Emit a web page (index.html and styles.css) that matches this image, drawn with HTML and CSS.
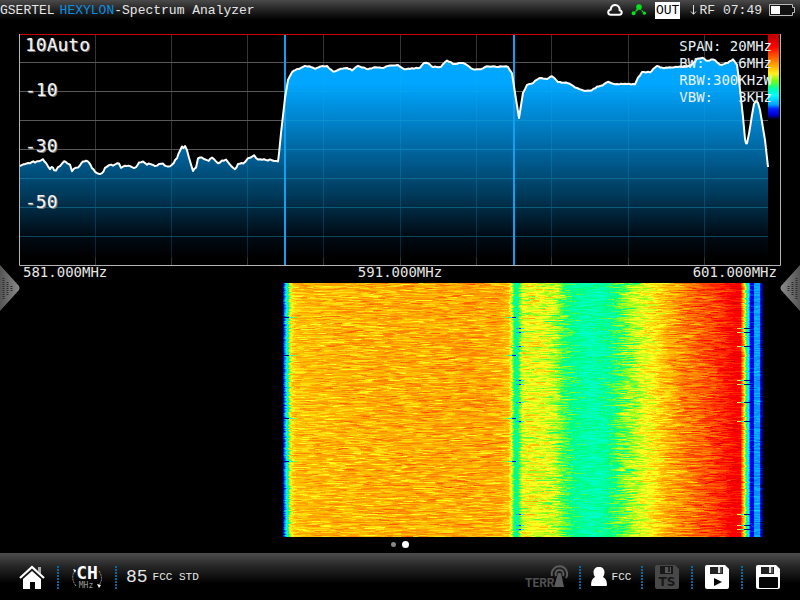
FILE: index.html
```html
<!DOCTYPE html>
<html lang="en">
<head>
<meta charset="utf-8">
<meta name="viewport" content="width=device-width, initial-scale=1">
<title>Spectrum Analyzer</title>
<link rel="stylesheet" href="styles.css">
</head>
<body>
<header class="topbar">
  <h1 class="title"><span>GSERTEL</span><span class="brand">HEXYLON</span><span class="dash">-</span><span>Spectrum Analyzer</span></h1>
  <div class="status">
    <svg width="16" height="12" viewBox="0 0 16 12" aria-hidden="true"><path d="M4 10.7H12.2C15.4 10.7 15.5 7 12.7 6.3C12.8 3 10.8 1 8.2 1C5.8 1 4 2.6 3.7 5.6C.3 6.4 .4 10.7 4 10.7Z" fill="none" stroke="#fff" stroke-width="2"/></svg>
    <svg class="nodes" width="16" height="12" viewBox="0 0 16 12" aria-hidden="true"><path d="M2.5 9.5 8 3.5 13 9" fill="none" stroke="#00d81c" stroke-width="1.2" stroke-dasharray="3 1"/><g fill="#00e51c"><circle cx="8" cy="3" r="2.8"/><circle cx="2.6" cy="9.3" r="2"/><circle cx="13.4" cy="9.2" r="1.6"/><circle cx="5.6" cy="6.6" r="1"/></g></svg>
    <span class="out">OUT</span>
    <span class="rf"><svg width="7" height="12" viewBox="0 0 7 12" aria-hidden="true"><path d="M3.5 1V10M1 7.5 3.5 10.3 6 7.5" fill="none" stroke="#ddd"/></svg>RF</span>
    <time class="clock">07:49</time>
    <svg width="26" height="12" viewBox="0 0 26 12" aria-hidden="true"><path d="M.5 .5H23.5V3.5H25.5V8.5H23.5V11.5H.5Z" fill="#111" stroke="#bbb"/><path d="M2 2H11V10H2Z" fill="#fff"/></svg>
  </div>
</header>

<main class="screen">
  <section class="plot" aria-label="Spectrum">
    <svg class="trace" viewBox="19 34 762 232" preserveAspectRatio="none" aria-hidden="true">
      <defs>
        <linearGradient id="fill" gradientUnits="userSpaceOnUse" x1="0" y1="60" x2="0" y2="258">
          <stop offset="0" stop-color="#00a8ff"/><stop offset=".12" stop-color="#00a6ff"/><stop offset=".4" stop-color="#0071b0"/><stop offset=".7" stop-color="#003654"/><stop offset=".88" stop-color="#000d17"/><stop offset="1" stop-color="#000"/>
        </linearGradient>
        <linearGradient id="scale" x1="0" y1="0" x2="0" y2="1">
          <stop offset="0" stop-color="#b00"/><stop offset=".14" stop-color="#f00"/><stop offset=".28" stop-color="#ff6a00"/><stop offset=".38" stop-color="#ffb400"/><stop offset=".46" stop-color="#fff01e"/><stop offset=".55" stop-color="#6bff10"/><stop offset=".64" stop-color="#00ffb0"/><stop offset=".72" stop-color="#0ff"/><stop offset=".83" stop-color="#00a0ff"/><stop offset=".88" stop-color="#0020ff"/><stop offset=".95" stop-color="#0000d0"/><stop offset="1" stop-color="#000020"/>
        </linearGradient>
        <path id="area"/>
        <clipPath id="under"><use href="#area"/></clipPath>
        <g id="grid-lines">
          <path class="row" d="M20 62.5H768M20 91.5H768M20 120.5H768M20 149.5H768M20 178.5H768M20 207.5H768M20 236.5H768"/>
          <path class="col" d="M95.5 35V265M171.5 35V265M247.5 35V265M323.5 35V265M400.5 35V265M476.5 35V265M551.5 35V265M628.5 35V265M704.5 35V265"/>
        </g>
      </defs>
      <use class="grid" href="#grid-lines"/>
      <g clip-path="url(#under)"><rect x="20" y="50" width="748" height="215" fill="url(#fill)"/><use class="grid-tint" href="#grid-lines"/></g>
      <path class="frame" d="M19.5 34V265.5H780.5V34"/>
      <path class="limit" d="M20 34.5H780"/>
      <rect x="768" y="35" width="11" height="84" fill="url(#scale)"/>
      <path class="marker" d="M285 35V265M514 35V265"/>
      <path class="line" id="curve"/>
    </svg>
    <div class="levels"><span>10Auto</span><span>-10</span><span>-30</span><span>-50</span></div>
    <pre class="readout">SPAN: 20MHz
BW:    6MHz
RBW:300KHzW
VBW:   3KHz</pre>
  </section>
  <div class="axis"><span>581.000MHz</span><span>591.000MHz</span><span>601.000MHz</span></div>
  <section class="waterfall" aria-label="Waterfall"><canvas id="waterfall" width="748" height="254"></canvas></section>
  <nav class="pages" aria-label="Pages">
    <button class="dot" aria-label="Page 1"></button>
    <button class="dot current" aria-label="Page 2"></button>
  </nav>
  <button class="side left" aria-label="Previous panel"><svg width="21" height="46" viewBox="0 0 21 46"><defs><linearGradient id="metal"><stop offset="0" stop-color="#555"/><stop offset="1" stop-color="#8a8a8a"/></linearGradient></defs><path d="M0 0 19 21Q20 23 19 25L0 46Z" fill="url(#metal)"/><path d="M3.5 13V34M7.5 17V30M11.5 21V26" stroke="#2c2c2c" stroke-width="2" stroke-dasharray="1 1"/></svg></button>
  <button class="side right" aria-label="Next panel"><svg width="21" height="46" viewBox="0 0 21 46"><path d="M0 0 19 21Q20 23 19 25L0 46Z" fill="url(#metal)"/><path d="M3.5 13V34M7.5 17V30M11.5 21V26" stroke="#2c2c2c" stroke-width="2" stroke-dasharray="1 1"/></svg></button>
</main>

<footer class="toolbar">
  <button class="tool wide" aria-label="Home"><svg width="26" height="24" viewBox="0 0 26 24"><path d="M19 2H22V9L19 6Z" fill="#aaa"/><path d="M1 13 13 2 25 13" fill="none" stroke="#fff" stroke-width="2.2"/><path d="M4 14 13 6 22 14V24H16V17H11V24H4Z" fill="#fff"/></svg></button>
  <button class="tool wide" aria-label="Channel or MHz"><svg width="32" height="26" viewBox="0 0 32 26"><path d="M4 6Q-1 14 5 22M28 7Q33 15 28 21" fill="none" stroke="#999" stroke-dasharray="2 1"/><path d="M2 5 5 6 4 9ZM26 20 30 21 28 24Z" fill="#fff"/><text class="ch" x="16" y="15" text-anchor="middle">CH</text><text class="mhz" x="15" y="24" text-anchor="middle">MHz</text></svg></button>
  <button class="tool channel"><span class="number">85</span><span>FCC STD</span></button>
  <button class="tool terr" aria-label="Terrestrial"><svg width="44" height="24" viewBox="0 0 44 24"><text class="band" x="0" y="22">TERR</text><path d="M33 8H36L39 22H29Z" fill="#5c5c5c"/><g fill="none" stroke="#5c5c5c" stroke-width="2"><path d="M31 11A4 4 0 1 1 38 11"/><path d="M27 11A7.7 7.7 0 1 1 41 13"/></g></svg></button>
  <button class="tool user"><svg width="16" height="19" viewBox="0 0 16 19" aria-hidden="true"><path d="M8 0C11.500 0 13.500 2 13.500 5.500Q13.500 8 12 10Q16 12 16 18Q16 19 15 19H1Q0 19 0 18Q0 12 4 10Q2.500 8 2.500 5.500C2.500 2 4.500 0 8 0Z" fill="#fff"/></svg>FCC</button>
  <button class="tool save" aria-label="Save TS"><svg width="24" height="24" viewBox="0 0 24 24"><path d="M2 0H20L24 4V22Q24 24 22 24H2Q0 24 0 22V2Q0 0 2 0Z" fill="#484848"/><path d="M5 1H18V9H5Z" fill="#181818"/><path d="M10 2H16V8H10Z" fill="#555"/><path d="M13 2H15V7H13Z" fill="#222"/><text class="ts" x="12" y="21" text-anchor="middle">TS</text></svg></button>
  <button class="tool save" aria-label="Play saved"><svg width="24" height="24" viewBox="0 0 24 24"><path d="M2 0H20L24 4V22Q24 24 22 24H2Q0 24 0 22V2Q0 0 2 0Z" fill="#fff"/><path d="M5 2H18V9H5Z" fill="#222"/><path d="M13 2H17V8H13Z" fill="#ddd"/><path d="M15 2H17V8H15Z" fill="#555"/><path d="M9 13 17 17 9 21Z" fill="#000"/></svg></button>
  <button class="tool save" aria-label="Save"><svg width="24" height="24" viewBox="0 0 24 24"><path d="M2 0H20L24 4V22Q24 24 22 24H2Q0 24 0 22V2Q0 0 2 0Z" fill="#fff"/><path d="M5 2H18V9H5Z" fill="#222"/><path d="M13 2H17V8H13Z" fill="#ddd"/><path d="M15 2H17V8H15Z" fill="#555"/><rect x="3" y="12" width="19" height="11" rx="1" fill="#050505"/></svg></button>
</footer>
<script src="analyzer.js"></script>
</body>
</html>
```
FILE: styles.css
```css
* { box-sizing: border-box; }

body {
  margin: 0;
  min-height: 100vh;
  display: flex;
  flex-direction: column;
  background: #000;
  color: #e6e6e6;
  font-family: "Liberation Mono", monospace;
  font-size: 13px;
}

button {
  padding: 0;
  border: 0;
  background: none;
  color: inherit;
  font: inherit;
}

svg { display: block; flex: none; }

.topbar {
  display: flex;
  justify-content: space-between;
  align-items: center;
  height: 20px;
  padding-right: 5px;
  background: linear-gradient(#4a4a4a, #222 50%, #000);
}

.title {
  display: flex;
  margin: 0;
  font-size: 13px;
  font-weight: 400;
}

.brand { margin-left: 5px; color: #0a8fe0; }

.status { display: flex; align-items: center; }
.nodes { margin: 0 8px; }

.out {
  padding: 1px 1px 0;
  background: #fff;
  color: #000;
  line-height: 16px;
}

.rf { display: flex; align-items: center; gap: 2px; margin: 0 8px 0 10px; }
.clock { margin-right: 7px; }

.screen {
  position: relative;
  flex: 1;
  display: grid;
  grid-template-rows: 232fr 17px 254fr 16px;
  padding-top: 14px;
}

.plot { position: relative; margin: 0 19px; min-height: 140px; }
.trace { position: absolute; width: 100%; height: 100%; }

.row, .col { fill: none; shape-rendering: crispEdges; }
.col { stroke-opacity: 0.6; }
.grid { stroke: #585858; }
.grid-tint { stroke: #18b4e0; opacity: 0.35; }
.frame { fill: none; stroke: #b4b4b4; }
.limit { stroke: #d00000; }
.line { fill: none; stroke: #fff; stroke-width: 2; stroke-linejoin: round; }
.marker { stroke: #10a0f0; stroke-width: 2; }

.levels {
  position: absolute;
  inset: 0 auto 0 6px;
  display: grid;
  grid-template-rows: 22px 45px 56px 56px;
  align-items: end;
  color: #f4f4f4;
  font: 18px/22px "DejaVu Sans Mono", monospace;
  text-shadow: 1px 1px #777;
}

.readout {
  position: absolute;
  top: 4px;
  right: 9px;
  margin: 0;
  color: #e8f2f8;
  font: 14px/17px "DejaVu Sans Mono", monospace;
}

.axis {
  display: flex;
  justify-content: space-between;
  padding: 0 23px;
  font: 14px/13px "DejaVu Sans Mono", monospace;
}

.waterfall { position: relative; margin: 0 32px 0 20px; min-height: 140px; }

.waterfall canvas {
  position: absolute;
  width: 100%;
  height: 100%;
  image-rendering: pixelated;
}

.pages {
  display: flex;
  justify-content: center;
  align-items: center;
  gap: 6px;
  padding-bottom: 2px;
}

.dot { width: 5px; height: 5px; border-radius: 50%; background: #888; }
.dot.current { width: 7px; height: 7px; background: #fff; }

.side { position: absolute; top: 245px; }
.side.left { left: 0; }
.side.right { right: 0; }
.side.right svg { transform: scaleX(-1); }

.toolbar {
  display: flex;
  height: 47px;
  padding-right: 7px;
  background: linear-gradient(#4c4c4c, #242424 30%, #000 65%);
  font-size: 11px;
}

.tool {
  position: relative;
  display: flex;
  align-items: center;
  justify-content: center;
}

.tool + .tool:not(.terr)::before {
  content: "";
  position: absolute;
  left: -1px;
  top: 13px;
  width: 2px;
  height: 23px;
  background: repeating-linear-gradient(#0868a0 0 2px, transparent 2px 3px);
}

.wide { width: 58px; padding-left: 6px; }
.wide + .wide { padding-left: 0; }
.channel { gap: 5px; padding-left: 10px; }
.number { font-size: 18px; }
.terr { margin-left: auto; padding-right: 11px; }
.user { width: 62px; gap: 5px; }
.save { width: 50px; }
.save:last-child { width: 51px; }

.ch { fill: #fff; font: bold 18px "DejaVu Sans Mono", monospace; }
.mhz { fill: #999; font: 8px "DejaVu Sans Mono", monospace; }
.band { fill: #505050; font: bold 12px Roboto, sans-serif; }
.ts { fill: #181818; font: bold 12px "DejaVu Sans", sans-serif; }
```
FILE: analyzer.js
```js
let seed = 20117;
function random() {
  seed = (seed * 1103515245 + 12345) % 2147483648;
  return seed / 2147483648;
}

// Spectrum trace: x, y pairs in the plot's own units.
const samples = [
  20,166, 25,164, 30,163, 35,162, 39,162, 43,160, 46,164, 50,169, 53,167, 54,170,
  56,170, 60,166, 64,161, 67,163, 70,165, 72,171, 74,168, 78,168, 81,163, 86,161,
  89,163, 92,168, 95,172, 98,174, 102,174, 105,168, 109,166, 115,164, 119,164,
  121,167, 125,165, 130,167, 136,168, 139,162, 143,161, 147,164, 150,163, 155,166,
  159,164, 163,164, 168,166, 172,165, 177,158, 180,150, 182,147, 185,147, 187,150,
  189,158, 193,171, 196,167, 198,159, 200,157, 207,161, 212,158, 218,163, 222,161,
  226,159, 230,165, 235,170, 238,164, 245,163, 248,159, 254,156, 258,159, 262,160,
  268,160, 278,161, 279,153, 281,133, 285,98, 288,80, 292,72, 297,69, 301,68,
  305,66, 309,66, 315,69, 322,66, 327,66, 333,71, 337,71, 343,68, 347,68, 352,70,
  358,66, 368,69, 377,67, 383,68, 388,66, 398,65, 404,69, 420,68, 424,63, 428,63,
  433,67, 441,67, 447,60, 453,64, 463,63, 473,69, 481,69, 487,66, 497,67, 500,66,
  508,67, 512,73, 515,93, 519,118, 523,93, 527,85, 533,83, 539,78, 547,79, 552,76,
  558,82, 568,83, 575,87, 581,90, 590,91, 597,87, 601,86, 608,82, 615,84, 635,84,
  638,78, 642,72, 650,72, 657,66, 662,68, 677,67, 690,66, 697,59, 702,58, 708,61,
  713,59, 717,62, 720,65, 728,63, 733,59, 737,65, 739,80, 743,117, 745,139,
  746,143, 747,143, 749,134, 752,115, 754,104, 756,101, 758,103, 760,110, 765,140,
  768,167
];

let points = `${samples[0]} ${samples[1]}`;
for (let i = 2; i < samples.length; i += 2) {
  const [x0, y0, x1, y1] = samples.slice(i - 2, i + 2);
  const parts = Math.max(1, Math.round((x1 - x0) / 2));
  for (let k = 1; k <= parts; k++) {
    const t = k / parts;
    const ripple = Math.abs(y1 - y0) < 10 ? (random() - 0.5) * (x1 < 280 ? 2 : 1) : 0;
    points += ` ${(x0 + (x1 - x0) * t).toFixed(1)} ${(y0 + (y1 - y0) * t + ripple).toFixed(1)}`;
  }
}
document.getElementById("curve").setAttribute("d", `M${points}`);
document.getElementById("area").setAttribute("d", `M${points}V258H20Z`);

// Colour steps from no signal to full scale.
const palette = [
  [0, 0, 0], [0, 0, 120], [0, 0, 240], [0, 110, 255], [0, 180, 255],
  [0, 255, 240], [0, 255, 190], [0, 255, 125], [145, 255, 30], [255, 255, 30],
  [255, 190, 0], [255, 132, 0], [255, 66, 0], [255, 0, 0], [215, 0, 0]
];

// Mean level by column: [column, palette step, spread].
const profile = [
  [0, 0, 0], [262, 0, 0], [263, 2, 0.4], [265, 4, 0.8], [267, 6, 0.8],
  [269, 8.3, 0.8], [272, 9.5, 0.6], [276, 10, 0.6], [320, 10.15, 0.7],
  [400, 10.3, 0.75], [440, 10.4, 0.75], [480, 10.35, 0.7], [488, 10, 0.5],
  [491, 8.8, 0.6], [494, 6.9, 0.4], [497, 6.6, 0.4], [499, 7.6, 0.6],
  [502, 8.7, 0.7], [510, 9, 0.8], [525, 8.8, 0.8], [536, 8.3, 0.8],
  [543, 7.5, 0.7], [555, 6.7, 0.6], [570, 6.3, 0.5], [585, 6.6, 0.6],
  [595, 7.2, 0.7], [602, 7.7, 0.8], [612, 8.2, 0.8], [625, 8.9, 0.6],
  [635, 9.4, 0.7], [648, 10.2, 0.7], [665, 11, 0.8], [685, 11.7, 0.8],
  [705, 12.6, 0.7], [714, 13.1, 0.5], [720, 13, 0.4], [722, 11, 0.8],
  [724, 9.3, 0.8], [726, 7, 0.8], [728, 5, 0.5], [730, 2, 0.3], [733, 2, 0.3],
  [734, 3.7, 0.4], [739, 3.7, 0.4], [740, 2, 0.4], [742, 1, 0.4], [743, 0, 0],
  [748, 0, 0]
];

// Short dropouts by row: [first column, last column, palette step].
const dropouts = new Map();
for (const row of [45, 49, 63, 97, 101, 119, 138, 231, 242, 246]) {
  dropouts.set(row, [[496, 498, 4], [499, 500, 2], [501, 503, 5], [717, 720, 9], [721, 723, 5], [724, 730, 1]]);
}
for (const row of [34, 72, 135, 178]) {
  dropouts.set(row, [[263, 268, 1], [269, 272, 5], [273, 277, 8], [483, 487, 8], [488, 491, 6], [492, 495, 2]]);
}

function levelAt(x) {
  let i = 1;
  while (i < profile.length - 1 && profile[i][0] < x) i++;
  const [x0, v0, s0] = profile[i - 1];
  const [x1, v1, s1] = profile[i];
  const t = (x - x0) / (x1 - x0);
  return [v0 + (v1 - v0) * t, s0 + (s1 - s0) * t];
}

const canvas = document.getElementById("waterfall");
const ctx = canvas.getContext("2d");
const { width, height } = canvas;
const image = ctx.createImageData(width, height);
const columns = Array.from({ length: width }, (_, x) => levelAt(x));

for (let y = 0; y < height; y++) {
  let noise = 0;
  let target = 0;
  let left = 0;
  for (let x = 0; x < width; x++) {
    if (left-- <= 0) {
      target = (random() + random() + random() - 1.5) * 1.5;
      left = 3 + Math.floor(random() * 9);
    }
    noise += (target - noise) * 0.5;
    const [mean, spread] = columns[x];
    let step = mean + noise * spread;
    for (const [a, b, value] of dropouts.get(y) || []) {
      if (x >= a && x <= b) step = value;
    }
    // Half steps blend neighbouring colours.
    step = Math.max(0, Math.min(14, Math.round(step * 2) / 2));
    const low = palette[Math.floor(step)];
    const high = palette[Math.ceil(step)];
    const at = (y * width + x) * 4;
    for (let c = 0; c < 3; c++) image.data[at + c] = (low[c] + high[c]) / 2;
    image.data[at + 3] = 255;
  }
}
ctx.putImageData(image, 0, 0);
```
